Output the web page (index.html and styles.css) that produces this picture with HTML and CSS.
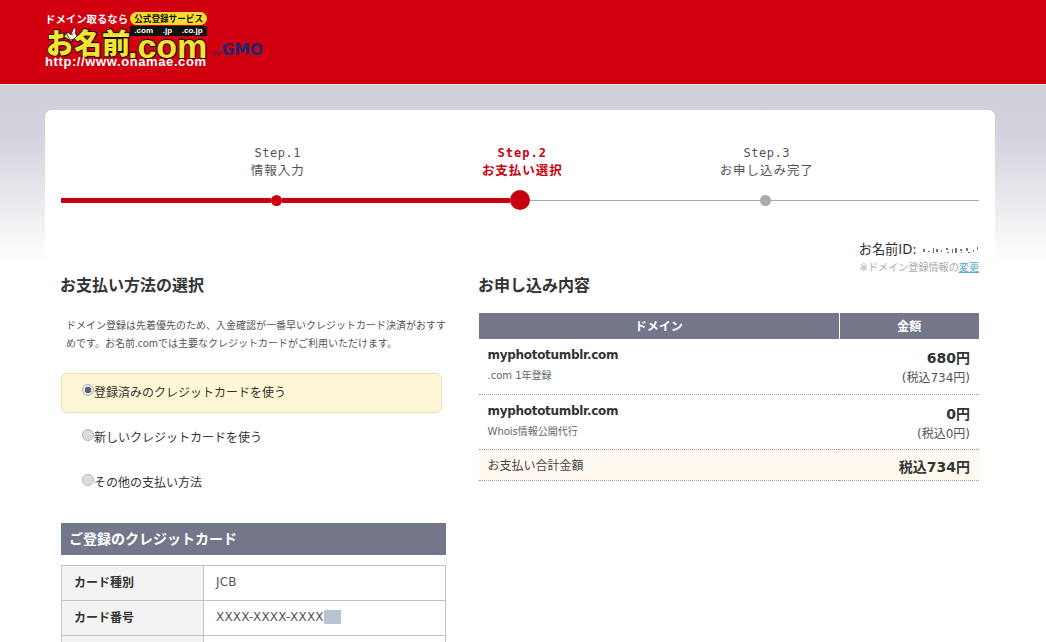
FILE: index.html
```html
<!DOCTYPE html>
<html lang="ja">
<head>
<meta charset="utf-8">
<title>お名前.com</title>
<link rel="stylesheet" href="styles.css">
</head>
<body>
<header class="site-header">
  <div class="logo">
    <div class="logo-top">
      <span class="logo-tag">ドメイン取るなら</span>
      <span class="logo-pill">公式登録サービス</span>
    </div>
    <div class="logo-tlds"><span>.com</span><span>.jp</span><span>.co.jp</span></div>
    <div class="logo-name">お名前</div>
    <svg class="logo-bird" width="12" height="13" viewBox="0 0 12 13"><path d="M8 0l2 3-1 3 2 3-3 3-4 1-2-4-2-3 3 0 2 2 1-3z" fill="#fff" stroke="#111" stroke-width=".7"/><path d="M6 6l2 1-2 2z" fill="#e8a020"/></svg>
    <div class="logo-dot">.com</div>
    <div class="logo-url">http://www.onamae.com</div>
    <div class="logo-gmo"><small>by</small>GMO</div>
  </div>
</header>
<main class="card">
  <section class="steps">
    <div class="step-labels">
      <div class="step-label"><span class="step-num">Step.1</span><span>情報入力</span></div>
      <div class="step-label is-current"><span class="step-num">Step.2</span><span>お支払い選択</span></div>
      <div class="step-label"><span class="step-num">Step.3</span><span>お申し込み完了</span></div>
    </div>
    <div class="track">
      <i class="seg seg-a"></i><i class="dot"></i><i class="seg seg-b"></i><i class="dot dot-big"></i>
      <i class="seg seg-c"></i><i class="dot dot-grey"></i><i class="seg seg-d"></i>
    </div>
  </section>
  <section class="account">
    <div class="account-id">お名前ID: <svg class="specks" width="58" height="9" viewBox="0 0 58 9"><path d="M2 3h2v3H2zM7 5h2v1H7zM12 2h1v5h-1zM15 3h2v3h-2zM20 4h1v2h-1zM25 2h2v2h-2zM26 6h2v1h-2zM31 3h1v4h-1zM34 2h2v5h-2zM39 3h2v2h-2zM40 6h1v1h-1zM45 2h2v3h-2zM47 6h2v1h-2zM52 4h1v2h-1zM56 1h1v3h-1z" fill="#777"/></svg></div>
    <div class="account-note">※ドメイン登録情報の<a href="#">変更</a></div>
  </section>
  <div class="columns">
    <section class="col-left">
      <h2 class="section-title">お支払い方法の選択</h2>
      <p class="lead">ドメイン登録は先着優先のため、入金確認が一番早いクレジットカード決済がおすすめです。お名前.comでは主要なクレジットカードがご利用いただけます。</p>
      <div class="methods">
        <label class="method is-selected"><input type="radio" name="pay" checked><span>登録済みのクレジットカードを使う</span></label>
        <label class="method"><input type="radio" name="pay"><span>新しいクレジットカードを使う</span></label>
        <label class="method"><input type="radio" name="pay"><span>その他の支払い方法</span></label>
      </div>
      <h3 class="sub-title">ご登録のクレジットカード</h3>
      <table class="card-table">
        <tr><th>カード種別</th><td>JCB</td></tr>
        <tr><th>カード番号</th><td>XXXX-XXXX-XXXX<i class="mask"></i></td></tr>
        <tr><th>&nbsp;</th><td>&nbsp;</td></tr>
      </table>
    </section>
    <section class="col-right">
      <h2 class="section-title">お申し込み内容</h2>
      <table class="order">
        <thead><tr><th>ドメイン</th><th class="col-price">金額</th></tr></thead>
        <tbody>
          <tr>
            <td><div class="domain">myphototumblr.com</div><div class="desc">.com 1年登録</div></td>
            <td class="price"><div class="amount">680円</div><div class="tax">(税込734円)</div></td>
          </tr>
          <tr>
            <td><div class="domain">myphototumblr.com</div><div class="desc">Whois情報公開代行</div></td>
            <td class="price"><div class="amount">0円</div><div class="tax">(税込0円)</div></td>
          </tr>
          <tr class="total">
            <td>お支払い合計金額</td>
            <td class="price"><b>税込734円</b></td>
          </tr>
        </tbody>
      </table>
    </section>
  </div>
</main>
</body>
</html>
```
FILE: styles.css
```css
* { box-sizing: border-box; }
html, body { margin: 0; height: 642px; overflow: hidden; }
body {
  background: linear-gradient(#cfd0da 0, #cfd0da 85px, #d0d1db 130px, #fff 262px) no-repeat;
  font-family: "DejaVu Sans", "Noto Sans CJK JP", sans-serif;
  color: #333;
}
.site-header {
  height: 85px;
  background: #d0000f;
  border-bottom: 1px solid #e4e4e8;
  padding: 12px 0 0 45px;
}
.logo { position: relative; width: 222px; height: 60px; }
.logo-top { display: flex; align-items: center; gap: 2px; }
.logo-tag { color: #fff; font: 700 10.4px/13px "Noto Sans CJK JP", sans-serif; white-space: nowrap; }
.logo-pill {
  background: #f7dd2d; color: #111; border-radius: 7px; width: 77px; text-align: center;
  font: 700 8.6px/13px "Noto Sans CJK JP", sans-serif; white-space: nowrap;
}
.logo-tlds {
  position: absolute; left: 85px; top: 14px; width: 77px; height: 10px;
  display: flex; gap: 1px; background: #111;
}
.logo-tlds span {
  flex: auto; color: #fff; text-align: center;
  font: 700 8px/10px "Liberation Sans", sans-serif;
}
.logo-name {
  position: absolute; left: 1px; top: 15px; white-space: nowrap;
  font: 900 28px/30px "Noto Sans CJK JP", sans-serif;
  color: #f7e332;
  -webkit-text-stroke: 2px #111; paint-order: stroke fill;
}
.logo-bird { position: absolute; left: 21px; top: 15px; }
.logo-dot {
  position: absolute; left: 83px; top: 24px; height: 20px; white-space: nowrap;
  font: 700 34px/20px "Liberation Sans", sans-serif;
  color: #f7e332;
  -webkit-text-stroke: 2px #111; paint-order: stroke fill;
}
.logo-url {
  position: absolute; left: 0; top: 43px; white-space: nowrap; color: #fff;
  font: 700 13px/14px "Liberation Sans", sans-serif; letter-spacing: .6px;
}
.logo-gmo {
  position: absolute; left: 167px; top: 31px; white-space: nowrap; color: #23256f;
  font: 700 15.5px/15px "DejaVu Sans", sans-serif;
}
.logo-gmo small { font-size: 7px; font-weight: 400; margin-right: 1px; }

.card {
  width: 950px; height: 560px; margin: 25px 0 0 45px; padding: 34px 16px 0;
  background: #fff; border-radius: 7px 7px 0 0;
}
.step-labels { display: flex; padding-left: 94.5px; }
.step-label {
  width: 244.5px; display: flex; flex-direction: column; align-items: center;
  font-size: 12.5px; line-height: 18px; letter-spacing: .95px; color: #555;
}
.step-num { font-family: "DejaVu Sans Mono", monospace; font-size: 12px; letter-spacing: .5px; }
.is-current { color: #c9000f; font-weight: 700; }
.is-current .step-num { letter-spacing: 1px; }
.track { display: flex; align-items: center; height: 22px; margin-top: 9px; }
.seg { display: block; height: 1px; background: #aaa; }
.seg-a, .seg-b { height: 5px; background: #c9000f; }
.seg-a { width: 210px; }
.seg-b { width: 228px; }
.seg-c { width: 230px; }
.seg-d { flex: 1; }
.dot { display: block; width: 11px; height: 11px; border-radius: 50%; background: #c9000f; flex: none; }
.dot-big { width: 20px; height: 20px; }
.dot-grey { background: #aaa; }

.account { margin-top: 30px; text-align: right; }
.account-id { font-size: 13.2px; line-height: 18px; color: #333; }
.specks { vertical-align: -1px; }
.account-note { font-size: 10.1px; line-height: 16px; color: #aaa; margin-top: 1px; }
.account-note a { color: #5aa5d6; }

.columns { display: grid; grid-template-columns: 385px 501px; column-gap: 32px; margin-top: -4px; }
.section-title { margin: 0; font-size: 16px; line-height: 24px; font-weight: 700; color: #333; font-family: "Noto Sans CJK JP", sans-serif; }
.col-left .section-title { margin-left: -1px; }
.lead {
  margin: 20px 0 0; padding: 0 0 0 5px; font-size: 10px; line-height: 18px; color: #555;
  font-family: "Noto Sans CJK JP", sans-serif; width: 390px;
}
.methods { margin-top: 21px; display: flex; flex-direction: column; gap: 5px; }
.method {
  display: flex; align-items: flex-start; width: 381px; height: 40px; padding: 9px 0 0 20px;
  font: 12px/18px "Noto Sans CJK JP", sans-serif; color: #333;
  border: 1px solid transparent; border-radius: 6px;
}
.method input { appearance: none; width: 12px; height: 12px; margin: 1px 0 0 0; border-radius: 50%; background: #dcdcdc; border: 1px solid #b4b4b4; flex: none; }
.method input:checked { background: radial-gradient(#5c6070 0 3px, #e2e2e2 3.5px); }
.is-selected { background: #fff6d6; border-color: #ecdfb4; }
.sub-title {
  margin: 20px 0 0; height: 32px; background: #737789; color: #fff; padding-left: 8px;
  font: 700 14px/31px "Noto Sans CJK JP", sans-serif;
}
.card-table { width: 385px; margin-top: 10px; border-collapse: collapse; table-layout: fixed; font: 12px/18px "DejaVu Sans", "Noto Sans CJK JP", sans-serif; }
.card-table th, .card-table td { border: 1px solid #c4c4c4; height: 35px; padding: 0 12px 2px; text-align: left; }
.card-table th { width: 142px; background: #f3f3f3; color: #333; font-weight: 700; font-family: "Noto Sans CJK JP", sans-serif; }
.card-table td { color: #555; letter-spacing: .2px; }
.mask { display: inline-block; width: 17px; height: 14px; background: #b7c5d3; vertical-align: -3px; }

.order { width: 500px; margin: 17px 0 0 1px; border-collapse: collapse; table-layout: fixed; }
.order thead th {
  height: 26px; padding: 0; background: #737789; color: #fff;
  font: 700 12px/26px "Noto Sans CJK JP", sans-serif;
}
.col-price { width: 140px; border-left: 1px solid #fff; }
.order tbody td { padding: 5px 9px 0 8.5px; height: 55px; vertical-align: top; border-bottom: 1px dotted #999; }
.domain { font-size: 12px; line-height: 22px; font-weight: 700; color: #333; letter-spacing: -.3px; }
.desc { font-size: 10px; line-height: 20px; color: #666; }
.order tbody .price { text-align: right; padding-right: 9px; }
.amount { font-size: 14px; line-height: 22px; font-weight: 700; margin-top: 3px; }
.tax { font-size: 12px; line-height: 18px; color: #555; }
.order .total td { height: 31px; background: #fff9ef; font: 12px/22px "Noto Sans CJK JP", sans-serif; color: #444; padding-top: 4px; }
.order .total .price { padding-top: 6px; }
.order .total b { font-size: 14px; color: #333; font-family: "DejaVu Sans", "Noto Sans CJK JP", sans-serif; }
```
